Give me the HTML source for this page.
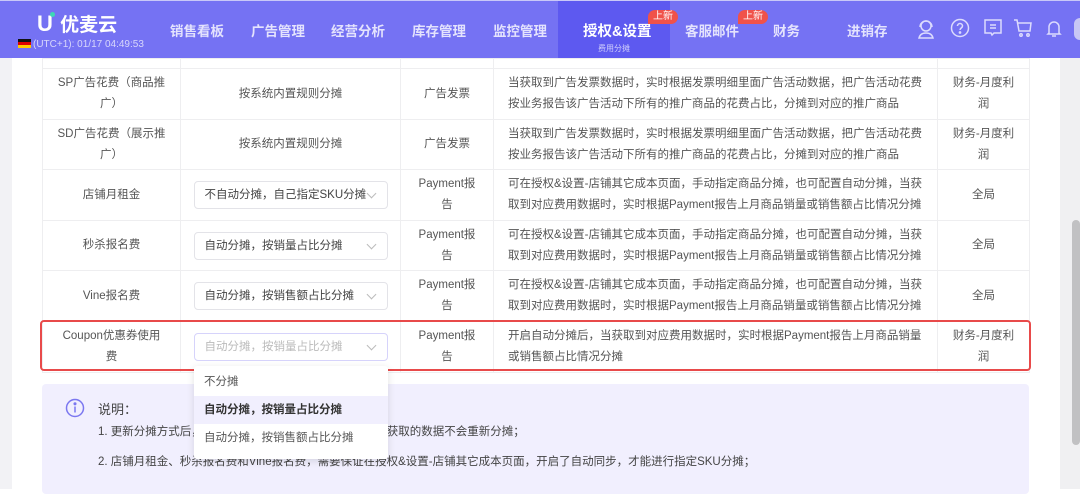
<!DOCTYPE html>
<html><head><meta charset="utf-8"><style>
*{box-sizing:border-box;margin:0;padding:0}
body{width:1080px;height:489px;overflow:hidden;background:#fff;font-family:"Liberation Sans","Noto Sans CJK SC",sans-serif;position:relative;color:#555}
.nav{position:absolute;left:0;top:0;width:1080px;height:58px;background:#7572f3;border-top:1px solid #c9c8f8}
.logo{position:absolute;left:37px;top:9px;color:#fff;font-size:19px;font-weight:bold}
.time{position:absolute;left:18px;top:38px;color:#d8d7fb;font-size:10px}
.flag{display:inline-block;width:13px;height:9px;background:linear-gradient(#111 33%,#d00 33%,#d00 66%,#fc0 66%);vertical-align:-1px;margin-right:2px}
.ni{position:absolute;top:19px;color:#e4e3fd;font-size:13.5px;font-weight:bold}
.act{position:absolute;left:558px;top:0;width:112px;height:58px;background:#5d59f0}
.badge{position:absolute;top:9px;height:14px;padding:0 5px;background:#f0524a;color:#fff;font-size:10px;line-height:14px;border-radius:7px 7px 7px 0}
.ic{position:absolute;top:17px}
.side{position:absolute;left:0;top:58px;width:12px;height:431px;background:#f2f2f5}
.sb{position:absolute;left:1060px;top:58px;width:20px;height:431px;background:#f0f0f2}
.thumb{position:absolute;left:1072px;top:220px;width:8px;height:225px;background:#c1c1c3;border-radius:4px}
table{position:absolute;left:42px;top:58px;border-collapse:collapse;table-layout:fixed;width:987px;font-size:11.5px;color:#555}
td{border:1px solid #eeeef0;text-align:center;line-height:21px;vertical-align:middle;white-space:nowrap;overflow:hidden}
td.d{text-align:left;padding-left:14px}
.sel{display:inline-block;width:194px;height:28px;border:1px solid #e3e3e8;border-radius:4px;text-align:left;padding-left:10px;line-height:26px;position:relative;font-size:11.5px;color:#444;vertical-align:middle}
.sel:after{content:"";position:absolute;right:12px;top:8px;width:6px;height:6px;border-right:1px solid #bbb;border-bottom:1px solid #bbb;transform:rotate(45deg)}
.red{position:absolute;left:40px;top:320px;width:991px;height:51px;border:2px solid #e84a4a;border-radius:4px}
.info{position:absolute;left:42px;top:384px;width:987px;height:110px;background:#f1effe;border-radius:4px;font-size:11.5px;color:#444}
.dd{position:absolute;left:194px;top:366px;width:194px;height:93px;background:#fff;box-shadow:0 2px 8px rgba(0,0,0,.12);border-radius:3px;font-size:11.5px;color:#555}
.dd div{height:28px;line-height:28px;padding-left:10px}
</style></head><body>
<div class="nav">
<div class="logo"><span style="font-size:22px">U</span><span style="display:inline-block;width:5px;height:5px;background:#3dd8b5;border-radius:50%;vertical-align:14px;margin-left:-3px"></span> 优麦云</div>
<div class="time"><span class="flag"></span>(UTC+1): 01/17 04:49:53</div>
<div class="ni" style="left:170px">销售看板</div>
<div class="ni" style="left:251px">广告管理</div>
<div class="ni" style="left:331px">经营分析</div>
<div class="ni" style="left:412px">库存管理</div>
<div class="ni" style="left:493px">监控管理</div>
<div class="act"></div>
<div class="ni" style="left:583px;color:#fff;font-size:14.5px">授权&amp;设置</div>
<div style="position:absolute;left:598px;top:42px;font-size:8px;color:#cfcdfb">费用分摊</div>
<div class="badge" style="left:648px">上新</div>
<div class="ni" style="left:685px">客服邮件</div>
<div class="badge" style="left:738px">上新</div>
<div class="ni" style="left:773px">财务</div>
<div class="ni" style="left:847px">进销存</div>
<svg class="ic" style="left:916px" width="20" height="22" viewBox="0 0 20 22" fill="none" stroke="#dcdbfd" stroke-width="1.5"><circle cx="10" cy="8" r="5"/><path d="M4 9a6 6 0 0112 0M3 20c1-4 4-5 7-5s6 1 7 5z"/></svg>
<svg class="ic" style="left:950px" width="20" height="20" fill="none" stroke="#dcdbfd" stroke-width="1.5"><circle cx="10" cy="10" r="8.5"/><path d="M7.5 8a2.5 2.5 0 115 0c0 2-2.5 2-2.5 4"/><circle cx="10" cy="14.5" r=".6" fill="#dcdbfd"/></svg>
<svg class="ic" style="left:983px" width="20" height="20" fill="none" stroke="#dcdbfd" stroke-width="1.5"><path d="M2 2h16v13H11l-2 2-1-2H2z"/><path d="M7 7h6M7 10h6"/></svg>
<svg class="ic" style="left:1013px" width="20" height="20" fill="none" stroke="#dcdbfd" stroke-width="1.5"><path d="M1 2h3l2 11h11l1-8H5"/><circle cx="8" cy="17" r="1.2"/><circle cx="15" cy="17" r="1.2"/></svg>
<svg class="ic" style="left:1045px" width="18" height="20" fill="none" stroke="#dcdbfd" stroke-width="1.5"><path d="M4 15V9a5 5 0 0110 0v6l1 1H3z"/><path d="M7 18h4"/></svg>
<div style="position:absolute;left:1074px;top:17px;width:12px;height:22px;border-radius:11px;background:#c8c7f5"></div>
</div>
<div class="side"></div>
<table>
<colgroup><col style="width:138px"><col style="width:220px"><col style="width:93px"><col style="width:444px"><col style="width:92px"></colgroup>
<tr style="height:10px"><td></td><td></td><td></td><td></td><td></td></tr>
<tr style="height:51px"><td>SP广告花费（商品推<br>广）</td><td>按系统内置规则分摊</td><td>广告发票</td><td class="d">当获取到广告发票数据时，实时根据发票明细里面广告活动数据，把广告活动花费<br>按业务报告该广告活动下所有的推广商品的花费占比，分摊到对应的推广商品</td><td>财务-月度利<br>润</td></tr>
<tr style="height:50px"><td>SD广告花费（展示推<br>广）</td><td>按系统内置规则分摊</td><td>广告发票</td><td class="d">当获取到广告发票数据时，实时根据发票明细里面广告活动数据，把广告活动花费<br>按业务报告该广告活动下所有的推广商品的花费占比，分摊到对应的推广商品</td><td>财务-月度利<br>润</td></tr>
<tr style="height:51px"><td>店铺月租金</td><td><span class="sel">不自动分摊，自己指定SKU分摊</span></td><td>Payment报<br>告</td><td class="d">可在授权&amp;设置-店铺其它成本页面，手动指定商品分摊，也可配置自动分摊，当获<br>取到对应费用数据时，实时根据Payment报告上月商品销量或销售额占比情况分摊</td><td>全局</td></tr>
<tr style="height:50px"><td>秒杀报名费</td><td><span class="sel">自动分摊，按销量占比分摊</span></td><td>Payment报<br>告</td><td class="d">可在授权&amp;设置-店铺其它成本页面，手动指定商品分摊，也可配置自动分摊，当获<br>取到对应费用数据时，实时根据Payment报告上月商品销量或销售额占比情况分摊</td><td>全局</td></tr>
<tr style="height:51px"><td>Vine报名费</td><td><span class="sel">自动分摊，按销售额占比分摊</span></td><td>Payment报<br>告</td><td class="d">可在授权&amp;设置-店铺其它成本页面，手动指定商品分摊，也可配置自动分摊，当获<br>取到对应费用数据时，实时根据Payment报告上月商品销量或销售额占比情况分摊</td><td>全局</td></tr>
<tr style="height:51px"><td>Coupon优惠券使用<br>费</td><td><span class="sel" style="color:#bbb;border-color:#d6d3fb">自动分摊，按销量占比分摊</span></td><td>Payment报<br>告</td><td class="d">开启自动分摊后，当获取到对应费用数据时，实时根据Payment报告上月商品销量<br>或销售额占比情况分摊</td><td>财务-月度利<br>润</td></tr>
</table>
<div class="red"></div>
<div class="info">
<svg style="position:absolute;left:23px;top:14px" width="20" height="20" fill="none" stroke="#7b77f0" stroke-width="1.5"><circle cx="10" cy="10" r="8.5"/><path d="M10 8.5v6"/><circle cx="10" cy="5.8" r=".8" fill="#7b77f0"/></svg>
<div style="position:absolute;left:56px;top:15px;font-size:13px">说明：</div>
<div style="position:absolute;left:56px;top:39px">1. 更新分摊方式后，只对新获取的费用数据生效，以前已获取的数据不会重新分摊；</div>
<div style="position:absolute;left:56px;top:69px">2. 店铺月租金、秒杀报名费和Vine报名费，需要保证在授权&amp;设置-店铺其它成本页面，开启了自动同步，才能进行指定SKU分摊；</div>
</div>
<div class="dd"><div style="margin-top:2px">不分摊</div><div style="background:#f1effe;font-weight:bold;color:#333">自动分摊，按销量占比分摊</div><div>自动分摊，按销售额占比分摊</div></div>
<div class="sb"></div><div class="thumb"></div>
</body></html>
